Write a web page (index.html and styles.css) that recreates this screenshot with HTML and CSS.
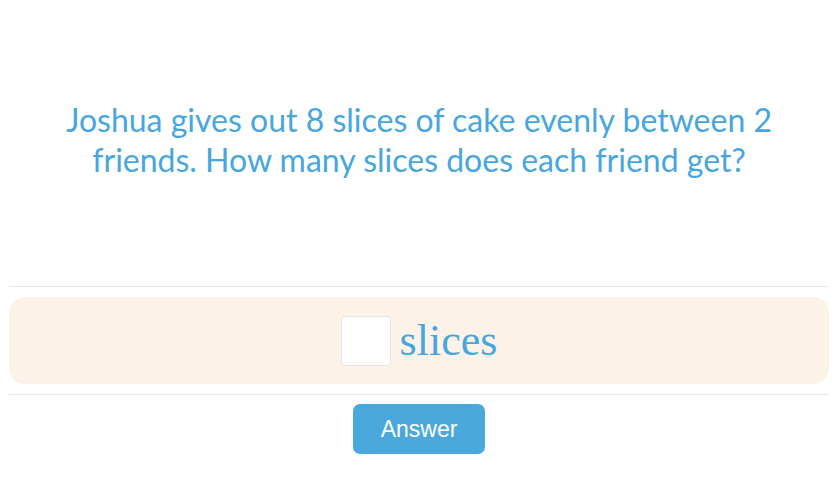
FILE: index.html
```html
<!DOCTYPE html>
<html>
<head>
<meta charset="utf-8">
<link rel="stylesheet" href="styles.css">
</head>
<body>
<div class="page">
  <div class="question">
    <p class="qtext">Joshua gives out 8 slices of cake evenly between 2 friends. How many slices does each friend get?</p>
  </div>
  <hr class="divider">
  <div class="answer-box">
    <input class="answer-input" type="text">
    <span class="unit">slices</span>
  </div>
  <hr class="divider">
  <div class="actions">
    <button class="btn">Answer</button>
  </div>
</div>
</body>
</html>
```
FILE: styles.css
```css
html, body {
  margin: 0;
  padding: 0;
  background: #ffffff;
}
.page {
  width: 820px;
  margin-left: 9px;
  display: flex;
  flex-direction: column;
}
.question {
  box-sizing: border-box;
  height: 286px;
  padding-bottom: 6px;
  display: flex;
  align-items: center;
  justify-content: center;
}
.qtext {
  margin: 0;
  padding: 0 40px;
  text-align: center;
  font-family: Lato, sans-serif;
  font-size: 32px;
  line-height: 40px;
  color: #48a6de;
}
.divider {
  margin: 0;
  border: 0;
  height: 1px;
  background: #e4e6ea;
}
.answer-box {
  margin: 10px 0;
  height: 87px;
  background: #fcf2e8;
  border-radius: 16px;
  display: flex;
  align-items: center;
  justify-content: center;
  gap: 9px;
}
.answer-input {
  box-sizing: border-box;
  width: 50px;
  height: 50px;
  margin: 0;
  border: 1px solid #e3e4e6;
  border-radius: 4px;
  background: #fff;
  outline: none;
}
.unit {
  font-family: "Liberation Serif", serif;
  font-size: 44px;
  color: #48a6de;
  line-height: 50px;
}
.actions {
  display: flex;
  justify-content: center;
  padding-top: 9px;
}
.btn {
  width: 132px;
  height: 50px;
  border: 0;
  border-radius: 7px;
  background: #4aa8dc;
  color: #fff;
  font-family: "Liberation Sans", Arial, sans-serif;
  font-size: 23px;
  padding: 0;
}
```
